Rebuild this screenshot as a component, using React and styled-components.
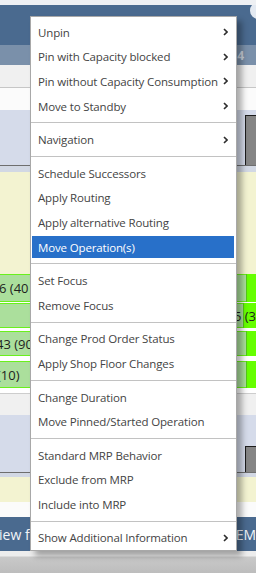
import React from 'react'
import styled, { createGlobalStyle } from 'styled-components'

// =============================================================================
const GlobalStyle = createGlobalStyle`
  *, *::before, *::after { box-sizing: border-box; }
  html, body { margin: 0; padding: 0; }
  body {
    width: 256px;
    height: 573px;
    overflow: hidden;
    font-family: "Open Sans", "Noto Sans", sans-serif;
  }
`

const menuGroups = [
  [
    { label: 'Unpin', sub: true },
    { label: 'Pin with Capacity blocked', sub: true },
    { label: 'Pin without Capacity Consumption', sub: true },
    { label: 'Move to Standby', sub: true },
  ],
  [{ label: 'Navigation', sub: true }],
  [
    { label: 'Schedule Successors' },
    { label: 'Apply Routing' },
    { label: 'Apply alternative Routing' },
    { label: 'Move Operation(s)', active: true },
  ],
  [{ label: 'Set Focus' }, { label: 'Remove Focus' }],
  [{ label: 'Change Prod Order Status' }, { label: 'Apply Shop Floor Changes' }],
  [{ label: 'Change Duration' }, { label: 'Move Pinned/Started Operation' }],
  [
    { label: 'Standard MRP Behavior' },
    { label: 'Exclude from MRP' },
    { label: 'Include into MRP' },
  ],
  [{ label: 'Show Additional Information', sub: true }],
]

// green operation rows behind the menu
const opRows = [
  { h: 28, gap: 0, left: '6 (40', indent: -1 },
  { h: 25, gap: 1, left: '', right: '5 (3' },
  { h: 25, gap: 3, left: '43 (90', indent: -4 },
  { h: 27, gap: 5, left: '(10)', indent: -3 },
]

// Styled Component
const Screen = styled.div`
  position: relative;
  width: 256px;
  height: 573px;
  overflow: hidden;
  display: flex;
  flex-direction: column;
  background: #fff;
`

const Band = styled.div`
  flex: 0 0 ${(p) => p.$h}px;
  background: ${(p) => p.$bg};
  border-top: ${(p) => (p.$top ? `1px solid ${p.$top}` : 'none')};
  border-bottom: ${(p) => (p.$line ? `1px solid ${p.$line}` : 'none')};
  display: flex;
  align-items: center;
  justify-content: space-between;
  overflow: hidden;
`

const Header = styled(Band)`
  align-items: flex-start;
  justify-content: flex-end;
`

const Avatar = styled.div`
  width: 17px;
  height: 17px;
  border-radius: 50%;
  background: #e3e9f1;
  margin-top: -3px;
  margin-right: -11px;
`

const DateLabel = styled.span`
  margin-left: auto;
  padding-right: 12px;
  font-size: 12px;
  font-weight: 700;
  color: #c9d2de;
`

const LoadBox = styled.div`
  align-self: flex-end;
  margin-left: auto;
  width: 12px;
  height: ${(p) => p.$h}px;
  margin-right: -1px;
  background: #858585;
  border: 1px solid #1c1c1c;
  border-bottom: none;
`

const RowStack = styled.div`
  flex: 0 0 119px;
  display: flex;
  flex-direction: column;
  background: #fff;
`

const OpRow = styled.div`
  flex: 0 0 ${(p) => p.$h}px;
  margin-top: ${(p) => p.$gap}px;
  display: flex;
`

const OpBar = styled.div`
  flex: 1;
  display: flex;
  align-items: center;
  overflow: hidden;
  background: #abdf9c;
  border-top: 1px solid #6af01c;
  border-bottom: 1px solid #6af01c;
  font-size: 13px;
  color: #1e1e1e;
  white-space: nowrap;
`

const OpText = styled.span`
  margin-left: ${(p) => p.$indent}px;
`

const ActiveBar = styled.div`
  flex: 0 0 10px;
  display: flex;
  align-items: center;
  background: #66ff00;
  border-left: 1px solid #55c81a;
  font-size: 13px;
  color: #1e1e1e;
  white-space: nowrap;
`

const ActiveText = styled.span`
  margin-left: -10px;
`

const Footer = styled(Band)`
  font-size: 14px;
  color: #f2f5f9;
  white-space: nowrap;
`

const FooterText = styled.span`
  margin-left: ${(p) => p.$indent || 0}px;
`

const Desk = styled.div`
  flex: 0 0 22px;
  background: linear-gradient(#ededed 0, #ededed 5px, #c9c9c9 6px, #bdbdbd 100%);
`

// context menu
const Menu = styled.ul`
  position: absolute;
  top: 16px;
  left: 30px;
  width: 207px;
  margin: 0;
  padding: 3px 0 0;
  list-style: none;
  display: flex;
  flex-direction: column;
  background: #fff;
  border: 1px solid #a8a8a8;
  box-shadow: 5px 5px 6px rgba(0, 0, 0, 0.32);
  font-size: 11.5px;
  letter-spacing: -0.15px;
`

const MenuItem = styled.li`
  flex: 0 0 22.6px;
  margin: 1px 2px 1px 1px;
  padding: 0 6px;
  display: flex;
  align-items: center;
  justify-content: space-between;
  white-space: nowrap;
  color: ${(p) => (p.$active ? '#ffffff' : '#444444')};
  background: ${(p) => (p.$active ? '#2870c9' : 'transparent')};
`

const Separator = styled.li`
  flex: 0 0 1px;
  margin: 4px 0;
  background: #c2c2c2;
`

const Chevron = () => (
  <svg width='5' height='8' viewBox='0 0 5 8'>
    <path d='M1 1 L4 4 L1 7' fill='none' stroke='#2e2e2e' strokeWidth='1.6' />
  </svg>
)

// ==============================================================================
const App = () => {
  return (
    <>
      <GlobalStyle />
      <Screen>
        <Band $h={5} $bg='#eef0f3' />
        <Header $h={40} $bg='#4a6a8f'>
          <Avatar />
        </Header>
        <Band $h={20} $bg='#7a90aa'>
          <DateLabel>24</DateLabel>
        </Band>
        <Band $h={23} $bg='#f0f0f0' $line='#c6c6c6' />
        <Band $h={22} $bg='#fbfbfb' />
        <Band $h={56} $bg='#d5dbea' $line='#6e6e6e'>
          <LoadBox $h={50} />
        </Band>
        <Band $h={6} $bg='#d2d8e4' />
        <Band $h={102} $bg='#f3f3d1' />

        <RowStack>
          {opRows.map((row, i) => (
            <OpRow key={i} $h={row.h} $gap={row.gap}>
              <OpBar>
                {row.left && <OpText $indent={row.indent}>{row.left}</OpText>}
              </OpBar>
              <ActiveBar>
                {row.right && <ActiveText>{row.right}</ActiveText>}
              </ActiveBar>
            </OpRow>
          ))}
        </RowStack>

        <Band $h={22} $bg='#f0f0f0' $top='#cdcdcd' />
        <Band $h={58} $bg='#d5dbea' $line='#6e6e6e'>
          <LoadBox $h={26} />
        </Band>
        <Band $h={4} $bg='#d2d8e4' />
        <Band $h={25} $bg='#f3f3d1' />
        <Band $h={15} $bg='#fbfbfb' />
        <Footer $h={34} $bg='#4a6a8f'>
          <FooterText $indent={-1}>iew fi</FooterText>
          <FooterText>EM</FooterText>
        </Footer>
        <Desk />

        <Menu>
          {menuGroups.map((group, g) => (
            <React.Fragment key={g}>
              {g > 0 && <Separator />}
              {group.map((item) => (
                <MenuItem key={item.label} $active={item.active}>
                  <span>{item.label}</span>
                  {item.sub && <Chevron />}
                </MenuItem>
              ))}
            </React.Fragment>
          ))}
        </Menu>
      </Screen>
    </>
  )
}

export default App
